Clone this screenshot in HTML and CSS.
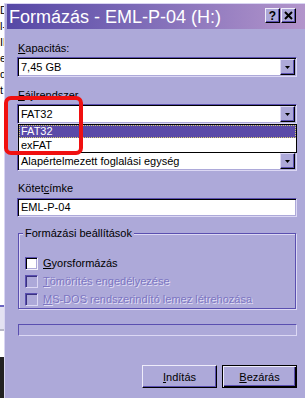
FILE: index.html
```html
<!DOCTYPE html>
<html lang="hu">
<head>
<meta charset="utf-8">
<title>Formázás</title>
<link rel="stylesheet" href="styles.css">
</head>
<body>
<div class="screen">
  <div class="desk">
    <div class="desk-text">
      <div>D</div>
      <div>l-</div>
      <div>IL</div>
      <div>eg</div>
      <div>d</div>
      <div>t</div>
    </div>
    <div class="desk-bar"></div>
    <div class="desk-gap"></div>
    <div class="desk-dark"></div>
  </div>

  <div class="window">
    <div class="titlebar">
      <span class="title">Formázás - EML-P-04 (H:)</span>
      <div class="tbtns">
        <span class="tbtn q">?</span>
        <span class="tbtn"><svg width="9" height="9" viewBox="0 0 9 9"><path d="M1 1 L8 8 M8 1 L1 8" stroke="#000" stroke-width="2" fill="none"/></svg></span>
      </div>
    </div>

    <div class="client">
      <div class="lbl"><u>K</u>apacitás:</div>
      <div class="combo">
        <span class="val">7,45 GB</span>
        <span class="dd"><svg width="7" height="4" viewBox="0 0 7 4"><polygon points="1,0 6,0 3.5,3" fill="#000"/></svg></span>
      </div>

      <div class="lbl gap"><u>F</u>ájlrendszer</div>
      <div class="combo open">
        <span class="val">FAT32</span>
        <span class="dd"><svg width="7" height="4" viewBox="0 0 7 4"><polygon points="1,0 6,0 3.5,3" fill="#000"/></svg></span>
        <div class="list">
          <div class="opt sel">FAT32</div>
          <div class="opt">exFAT</div>
        </div>
      </div>

      <div class="lbl gap">Foglalási egység mérete</div>
      <div class="combo">
        <span class="val">Alapértelmezett foglalási egység</span>
        <span class="dd"><svg width="7" height="4" viewBox="0 0 7 4"><polygon points="1,0 6,0 3.5,3" fill="#000"/></svg></span>
      </div>

      <div class="lbl gap2">Kötet<u>c</u>ímke</div>
      <div class="field">EML-P-04</div>

      <div class="group">
        <span class="legend">Formázási beállítások</span>
        <div class="rows">
          <div class="row"><span class="cb"></span><span><u>G</u>yorsformázás</span></div>
          <div class="row dis"><span class="cb"></span><span><u>T</u>ömörítés engedélyezése</span></div>
          <div class="row dis"><span class="cb"></span><span><u>M</u>S-DOS rendszerindító lemez létrehozása</span></div>
        </div>
      </div>

      <div class="progress"></div>

      <div class="buttons">
        <span class="btn"><u>I</u>ndítás</span>
        <span class="btn def"><u>B</u>ezárás</span>
      </div>
    </div>
  </div>

  <div class="annot"></div>
</div>
</body>
</html>
```

FILE: styles.css
```css
* { box-sizing: border-box; }
html, body { margin: 0; padding: 0; }
body {
  width: 305px;
  height: 398px;
  overflow: hidden;
  background: #fff;
  font-family: "Liberation Sans", Arial, sans-serif;
  font-size: 11px;
  color: #000;
}
.screen {
  position: relative;
  display: flex;
  height: 398px;
}

/* desktop strip at the left */
.desk {
  flex: none;
  width: 4px;
  height: 398px;
  overflow: hidden;
  display: flex;
  flex-direction: column;
  background: #fff;
}
.desk-text {
  padding-top: 2px;
  line-height: 16px;
  height: 305px;
  white-space: nowrap;
}
.desk-bar {
  height: 26px;
  border-top: 2px solid #6a64c0;
  border-bottom: 2px solid #b8b8c8;
  background: #e4e2f2;
}
.desk-gap { flex: 1; }
.desk-dark { height: 41px; background: #222; }

/* window */
.window {
  flex: none;
  width: 306px;
  margin-top: 3px;
  height: 395px;
  background: #ada9d9;
  border-top: 1px solid #d9d5f2;
  border-left: 1px solid #d9d5f2;
  padding-left: 2px;
}
.titlebar {
  height: 25px;
  display: flex;
  align-items: flex-start;
  padding: 0 14px 0 2px;
  background: linear-gradient(to right, #5648a6 0%, #7a68b6 40%, #b496cc 100%);
  color: #fff;
}
.title {
  font-size: 18px;
  line-height: 23px;
  padding-top: 2px;
  white-space: nowrap;
}
.tbtns {
  margin-left: auto;
  margin-top: 4px;
  display: flex;
  gap: 1px;
}
.tbtn {
  width: 15px;
  height: 15px;
  background: #ada9d9;
  border-top: 1px solid #f0eefa;
  border-left: 1px solid #f0eefa;
  border-right: 1px solid #000;
  border-bottom: 1px solid #000;
  box-shadow: inset -1px -1px 0 #5a4fb0;
  display: flex;
  align-items: center;
  justify-content: center;
  color: #000;
}
.tbtn.q {
  font-weight: bold;
  font-size: 12px;
  line-height: 12px;
}

/* client area */
.client {
  padding: 13px 13px 0 10px;
}
.lbl {
  height: 13px;
  line-height: 13px;
  padding-left: 1px;
  white-space: nowrap;
}
.lbl.gap { margin-top: 12px; }
.lbl.gap2 { margin-top: 11px; }

.combo {
  position: relative;
  margin-top: 2px;
  width: 280px;
  height: 20px;
  background: #fff;
  border: 1px solid;
  border-color: #5a4fb0 #dcd8f4 #dcd8f4 #5a4fb0;
  box-shadow: inset 1px 1px 0 #000, inset -1px -1px 0 #ada9d9;
  display: flex;
  padding: 1px 1px 1px 1px;
}
.combo .val {
  flex: 1;
  padding-left: 2px;
  padding-top: 1px;
  line-height: 15px;
  white-space: nowrap;
  overflow: hidden;
}
.combo .dd {
  flex: none;
  width: 15px;
  height: 16px;
  background: #ada9d9;
  border-top: 1px solid #dcd8f4;
  border-left: 1px solid #dcd8f4;
  border-right: 1px solid #000;
  border-bottom: 1px solid #000;
  box-shadow: inset -1px -1px 0 #5a4fb0;
  display: flex;
  align-items: center;
  justify-content: center;
}
.combo .dd svg { display: block; margin-top: 1px; }

.list {
  position: absolute;
  top: 19px;
  left: 0px;
  right: -1px;
  z-index: 2;
  background: #fff;
  border: 1px solid #000;
}
.opt {
  height: 13px;
  line-height: 13px;
  padding-left: 2px;
}
.opt + .opt { height: 14px; line-height: 14px; }
.opt.sel {
  background: #5a4aa8;
  color: #fff;
  outline: 1px dotted #d8d070;
  outline-offset: -1px;
}

.field {
  margin-top: 3px;
  width: 280px;
  height: 19px;
  background: #fff;
  border: 1px solid;
  border-color: #5a4fb0 #dcd8f4 #dcd8f4 #5a4fb0;
  box-shadow: inset 1px 1px 0 #000, inset -1px -1px 0 #ada9d9;
  padding: 1px 2px 0 3px;
  line-height: 15px;
}

/* group box */
.group {
  margin-top: 16px;
  margin-left: 1px;
  width: 278px;
  height: 76px;
  border: 1px solid #5a4fb0;
  box-shadow: inset 1px 1px 0 #dcd8f4, 1px 1px 0 #dcd8f4;
}
.legend {
  display: inline-block;
  margin: -7px 0 0 4px;
  padding: 0 2px;
  height: 13px;
  line-height: 13px;
  background: #ada9d9;
  vertical-align: top;
}
.rows {
  display: flex;
  flex-direction: column;
  gap: 5px;
  margin-top: 11px;
  padding-left: 6px;
}
.row {
  display: flex;
  align-items: center;
  gap: 5px;
  height: 13px;
  line-height: 13px;
  white-space: nowrap;
}
.cb {
  flex: none;
  width: 13px;
  height: 13px;
  background: #fff;
  border: 1px solid;
  border-color: #5a4fb0 #f2f0fb #f2f0fb #5a4fb0;
  box-shadow: inset 1px 1px 0 #000, inset -1px -1px 0 #ada9d9;
}
.row.dis { color: #7c76c2; text-shadow: 1px 1px 0 #e2dff5; }
.row.dis .cb {
  background: #ada9d9;
  box-shadow: inset 1px 1px 0 #3a3280;
  border-color: #5a4fb0 #dcd8f4 #dcd8f4 #5a4fb0;
}

.progress {
  margin-top: 15px;
  margin-left: 1px;
  width: 279px;
  height: 12px;
  border: 1px solid;
  border-color: #5a4fb0 #dcd8f4 #dcd8f4 #5a4fb0;
}

.buttons {
  margin-top: 29px;
  width: 280px;
  display: flex;
  justify-content: flex-end;
  gap: 5px;
}
.btn {
  width: 75px;
  height: 23px;
  display: flex;
  align-items: center;
  justify-content: center;
  background: #ada9d9;
  border-top: 1px solid #eeecfa;
  border-left: 1px solid #eeecfa;
  border-right: 1px solid #000;
  border-bottom: 1px solid #000;
  box-shadow: inset -1px -1px 0 #5a4fb0;
}
.btn.def {
  border: 1px solid #000;
  box-shadow: inset 1px 1px 0 #eeecfa, inset -1px -1px 0 #000, inset -2px -2px 0 #5a4fb0;
}

/* annotation */
.annot {
  position: absolute;
  left: 4px;
  top: 96px;
  width: 79px;
  height: 59px;
  border: 4px solid #f01010;
  border-radius: 7px;
  z-index: 5;
}
```
